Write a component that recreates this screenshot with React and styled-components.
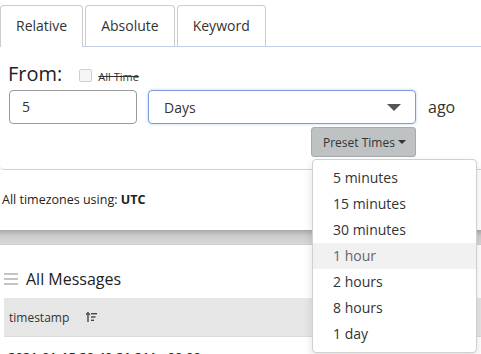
import styled, { createGlobalStyle } from "styled-components";

const presets = [
  "5 minutes",
  "15 minutes",
  "30 minutes",
  "1 hour",
  "2 hours",
  "8 hours",
  "1 day",
];

function App() {
  return (
    <>
      <GlobalStyle />
      <Page>
        <TabBar>
          <Tab active>Relative</Tab>
          <Tab>Absolute</Tab>
          <Tab>Keyword</Tab>
        </TabBar>
        <Panel>
          <FromRow>
            <FromLabel>From:</FromLabel>
            <CheckBox />
            <AllTime>All Time</AllTime>
          </FromRow>
          <InputRow>
            <NumberInput>5</NumberInput>
            <SelectBox>
              <span>Days</span>
              <Caret />
            </SelectBox>
            <Ago>ago</Ago>
          </InputRow>
          <PresetRow>
            <PresetWrap>
              <PresetButton>
                Preset Times <SmallCaret />
              </PresetButton>
              <Menu>
                {presets.map((p) => (
                  <MenuItem key={p} hover={p === "1 hour"}>
                    {p}
                  </MenuItem>
                ))}
              </Menu>
            </PresetWrap>
          </PresetRow>
        </Panel>
        <Timezone>
          All timezones using: <b>UTC</b>
        </Timezone>
        <Band />
        <Messages>
          <MessagesTitle>
            <svg width="14" height="12" viewBox="0 0 14 12">
              <rect x="0" y="0" width="14" height="2" fill="#c4c4c4" />
              <rect x="0" y="5" width="14" height="2" fill="#c4c4c4" />
              <rect x="0" y="10" width="14" height="2" fill="#c4c4c4" />
            </svg>
            All Messages
          </MessagesTitle>
          <TableHead>
            timestamp
            <svg width="11" height="10" viewBox="0 0 11 10">
              <path d="M2 10V1" stroke="#444" strokeWidth="1.4" />
              <path d="M0 3L2 0.5L4 3" stroke="#444" strokeWidth="1.2" fill="none" />
              <rect x="5" y="1" width="6" height="1.4" fill="#444" />
              <rect x="5" y="4.3" width="4.5" height="1.4" fill="#444" />
              <rect x="5" y="7.6" width="3" height="1.4" fill="#444" />
            </svg>
          </TableHead>
          <TableRow>2021-01-15 20:40:21.211 +00:00</TableRow>
        </Messages>
      </Page>
    </>
  );
}

const GlobalStyle = createGlobalStyle`
  html, body {
    margin: 0;
    padding: 0;
    background: #fff;
    overflow: hidden;
  }
  body {
    font-family: "Open Sans", "Noto Sans", sans-serif;
    color: #333;
  }
`;

const Page = styled.div`
  width: 481px;
  height: 354px;
  overflow: hidden;
`;

const TabBar = styled.div`
  display: flex;
  gap: 2px;
  padding-top: 5px;
  border-bottom: 1px solid #c4cfe6;
`;

const Tab = styled.div`
  padding: 10px 15px;
  font-size: 14px;
  line-height: 20px;
  color: #333;
  border: 1px solid #ccc;
  border-bottom: none;
  border-radius: 4px 4px 0 0;
  background: #fff;
  margin-bottom: ${(p) => (p.active ? "-1px" : "0")};
  padding-bottom: ${(p) => (p.active ? "11px" : "10px")};
`;

const Panel = styled.div`
  padding: 15px 0 12px 9px;
  border-bottom: 1px solid #c9d3e8;
  border-bottom-left-radius: 4px;
`;

const FromRow = styled.div`
  display: flex;
  align-items: center;
  height: 24px;
  margin-left: -1px;
  margin-bottom: 4px;
`;

const FromLabel = styled.span`
  font-size: 20px;
  line-height: 24px;
  color: #222;
`;

const CheckBox = styled.span`
  width: 11px;
  height: 11px;
  margin: 3px 0 0 17px;
  border: 1px solid #cfcfcf;
  border-radius: 2px;
  background: #f6f6f6;
`;

const AllTime = styled.span`
  margin: 5px 0 0 6px;
  font-size: 11px;
  color: #333;
  text-decoration: line-through;
`;

const InputRow = styled.div`
  display: flex;
  align-items: center;
`;

const NumberInput = styled.div`
  box-sizing: border-box;
  width: 128px;
  height: 34px;
  padding: 0 12px;
  border: 1px solid #9a9a9a;
  border-radius: 4px;
  font-size: 14px;
  line-height: 32px;
`;

const SelectBox = styled.div`
  box-sizing: border-box;
  display: flex;
  align-items: center;
  justify-content: space-between;
  width: 268px;
  height: 34px;
  margin-left: 11px;
  padding: 0 14px 0 15px;
  border: 1px solid #7d9bd8;
  border-radius: 4px;
  box-shadow: 0 0 3px rgba(110, 140, 220, 0.45);
  font-size: 14px;
`;

const Caret = styled.span`
  width: 0;
  height: 0;
  border-left: 7px solid transparent;
  border-right: 7px solid transparent;
  border-top: 7px solid #555;
`;

const Ago = styled.span`
  margin-left: 12px;
  font-size: 16px;
`;

const PresetRow = styled.div`
  display: flex;
  justify-content: flex-end;
  width: 407px;
  margin-top: 3px;
`;

const PresetWrap = styled.div`
  position: relative;
`;

const PresetButton = styled.div`
  box-sizing: border-box;
  display: flex;
  align-items: center;
  gap: 3px;
  width: 105px;
  height: 30px;
  padding-left: 11px;
  background: #bec2c2;
  border: 1px solid #a7abab;
  border-radius: 3px;
  font-size: 12px;
  color: #333;
`;

const SmallCaret = styled.span`
  width: 0;
  height: 0;
  border-left: 4px solid transparent;
  border-right: 4px solid transparent;
  border-top: 4px solid #333;
`;

const Menu = styled.div`
  position: absolute;
  top: 32px;
  left: 1px;
  z-index: 5;
  width: 165px;
  box-sizing: border-box;
  padding: 5px 0;
  background: #fff;
  border: 1px solid #d0d0d0;
  border-radius: 4px;
  box-shadow: 0 4px 10px rgba(0, 0, 0, 0.12);
`;

const MenuItem = styled.div`
  height: 26px;
  padding-left: 20px;
  font-size: 14px;
  line-height: 26px;
  color: ${(p) => (p.hover ? "#666" : "#333")};
  background: ${(p) => (p.hover ? "#f1f1f1" : "transparent")};
`;

const Timezone = styled.div`
  margin: 22px 0 22px 2px;
  font-size: 12.5px;
  line-height: 16px;
  color: #222;
`;

const Band = styled.div`
  height: 14px;
  background: linear-gradient(#a9a9a9, #cbcbcb 40%, #d9d9d9);
  border-bottom: 1px solid #cfcfcf;
`;

const Messages = styled.div`
  padding-left: 4px;
`;

const MessagesTitle = styled.div`
  display: flex;
  align-items: center;
  gap: 8px;
  margin-top: 23px;
  height: 22px;
  font-size: 16px;
  color: #222;
`;

const TableHead = styled.div`
  display: flex;
  align-items: center;
  gap: 17px;
  height: 38px;
  margin-top: 8px;
  padding-left: 5px;
  background: #e6e6e6;
  border-bottom: 1px solid #dcdcdc;
  font-size: 12px;
  color: #333;
`;

const TableRow = styled.div`
  padding: 11px 0 0 4px;
  font-size: 13px;
  font-weight: 600;
  color: #222;
`;

export default App;
